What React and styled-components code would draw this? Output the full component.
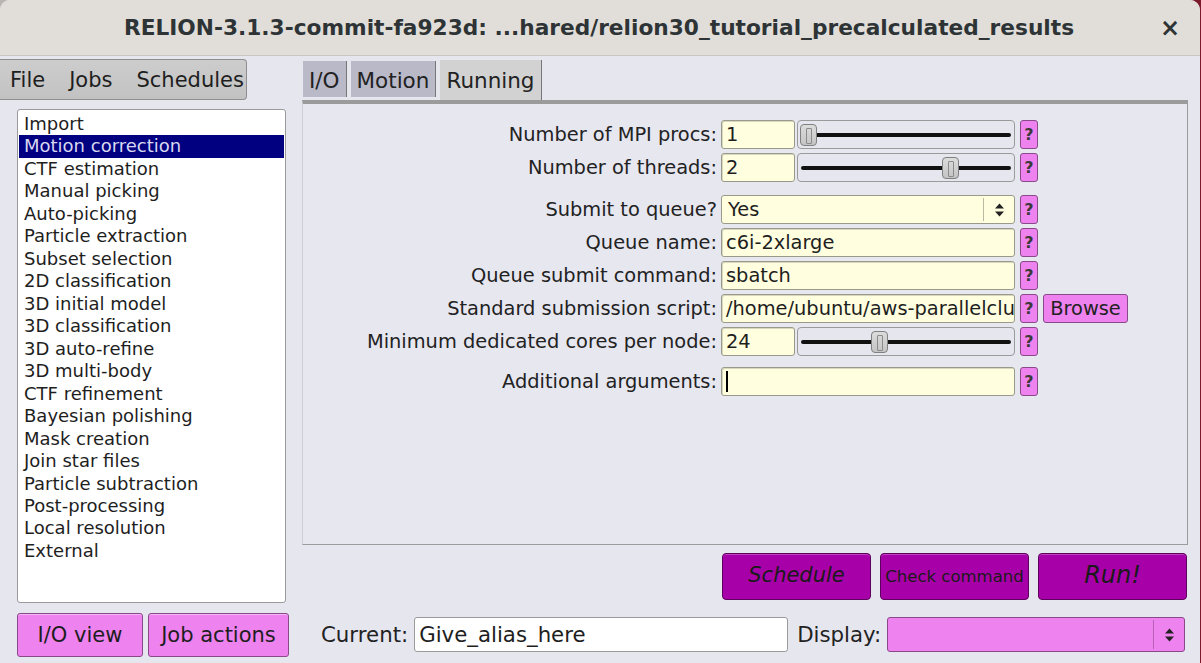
import React from 'react';
import styled, { createGlobalStyle } from 'styled-components';

const GlobalStyle = createGlobalStyle`
  html, body {
    margin: 0;
    padding: 0;
    background: linear-gradient(to right, #b9b6b1 50%, #7a1a2a 50%);
  }
  * {
    box-sizing: border-box;
  }
`;

const FONT = `"DejaVu Sans", "Noto Sans", sans-serif`;

const Window = styled.div`
  width: 1200px;
  height: 663px;
  display: flex;
  flex-direction: column;
  font-family: ${FONT};
  color: #222;
  background: #e6e6ef;
  border-radius: 10px 10px 0 0;
  overflow: hidden;
`;

const TitleBar = styled.div`
  height: 56px;
  flex-shrink: 0;
  display: flex;
  align-items: center;
  justify-content: center;
  position: relative;
  background: #e1ded9;
  border-bottom: 1px solid #c9c5bf;
  font-weight: bold;
  font-size: 21.7px;
  color: #2e3436;
  padding-right: 2px;
`;

const CloseX = styled.span`
  position: absolute;
  right: 20px;
  top: 14px;
  font-size: 24px;
  font-weight: bold;
  color: #2e3436;
`;

const Body = styled.div`
  flex: 1;
  display: flex;
  padding-top: 3px;
`;

const LeftColumn = styled.div`
  width: 302px;
  display: flex;
  flex-direction: column;
`;

const MenuBar = styled.div`
  width: 247px;
  height: 41px;
  display: flex;
  align-items: center;
  gap: 24px;
  padding-left: 10px;
  background: linear-gradient(#cdcdcd, #c2c2c2);
  border: 1px solid #8e8e8e;
  border-left: none;
  border-radius: 0 4px 4px 0;
  font-size: 21px;
  color: #1e1e1e;
  white-space: nowrap;
`;

const JobList = styled.div`
  margin: 9px 0 0 17px;
  width: 269px;
  height: 494px;
  background: #fff;
  border: 1px solid #9a9a9a;
  border-radius: 3px;
  padding: 3px 1px 2px;
  font-size: 18px;
`;

const JobItem = styled.div`
  height: 22.47px;
  line-height: 22.47px;
  padding-left: 5px;
  white-space: nowrap;
  background: ${p => (p.$selected ? '#000080' : 'transparent')};
  color: ${p => (p.$selected ? '#d8d8f0' : '#1e1e1e')};
`;

const SideButtons = styled.div`
  display: flex;
  gap: 5px;
  margin: 10px 0 0 17px;
`;

const PinkButton = styled.button`
  width: ${p => p.$w}px;
  height: 44px;
  background: #ee82ee;
  border: 1px solid #8a4a8a;
  border-radius: 3px;
  box-shadow: inset 0 1px 0 #f6b6f6;
  font-family: ${FONT};
  font-size: 21px;
  color: #1e1e1e;
  padding: 0;
`;

const MainColumn = styled.div`
  width: 886px;
  display: flex;
  flex-direction: column;
`;

const TabRow = styled.div`
  height: 41px;
  display: flex;
  align-items: flex-end;
  gap: 4px;
  padding-left: 1px;
`;

const Tab = styled.div`
  height: ${p => (p.$active ? 40 : 36)}px;
  padding: 0 6px;
  display: flex;
  align-items: center;
  background: ${p => (p.$active ? '#d2d2d2' : '#b9b9c8')};
  border-right: 1px solid #777;
  font-size: 21.5px;
  color: #222;
  margin-bottom: ${p => (p.$active ? 0 : 3)}px;
  padding-top: ${p => (p.$active ? 0 : 2)}px;
`;

const Panel = styled.div`
  height: 445px;
  background: #e7e7f0;
  border-top: 4px solid #9b9b9b;
  border-right: 1px solid #9b9b9b;
  border-bottom: 1px solid #9b9b9b;
  border-left: 1px solid #cfcfd8;
  padding-top: 16px;
  display: flex;
  flex-direction: column;
`;

const FormRow = styled.div`
  display: flex;
  align-items: center;
  height: 29px;
  margin-top: ${p => p.$gap}px;
`;

const Label = styled.div`
  width: 418px;
  text-align: right;
  padding-right: 4px;
  font-size: 19.4px;
  color: #222;
  white-space: nowrap;
`;

const TextField = styled.div`
  width: ${p => p.$w}px;
  height: 29px;
  background: #ffffe0;
  border: 1px solid #9a9a8a;
  border-radius: 3px;
  box-shadow: inset 1px 1px 0 #d8d8c0;
  padding-left: 4px;
  display: flex;
  align-items: center;
  font-size: 19.4px;
  color: #1e1e1e;
  white-space: nowrap;
  overflow: hidden;
`;

const Caret = styled.span`
  width: 2px;
  height: 21px;
  background: #000;
`;

const SliderBox = styled.div`
  width: 218px;
  height: 29px;
  margin-left: 2px;
  border: 1px solid #9a9a9a;
  border-radius: 4px;
  position: relative;
  background: #e6e6ef;
`;

const Track = styled.div`
  position: absolute;
  left: 3px;
  right: 3px;
  top: 12px;
  height: 4px;
  background: #111;
  border-radius: 2px;
`;

const Thumb = styled.div`
  position: absolute;
  top: 3px;
  width: 17px;
  height: 22px;
  background: linear-gradient(#dcdcdc, #c4c4c4);
  border: 1px solid #808080;
  border-radius: 4px;
  &::after {
    content: '';
    position: absolute;
    left: 5px;
    top: 3px;
    width: 4px;
    height: 14px;
    border: 1px solid #8a8a8a;
    border-radius: 1px;
  }
`;

const SelectBox = styled.div`
  width: ${p => p.$w}px;
  height: ${p => p.$h || 29}px;
  background: ${p => p.$bg || '#ffffe0'};
  border: 1px solid ${p => p.$border || '#9a9a8a'};
  border-radius: 3px;
  display: flex;
  align-items: center;
  font-size: 19.4px;
  color: #1e1e1e;
`;

const SelectValue = styled.div`
  flex: 1;
  padding-left: 6px;
`;

const SelectArrow = styled.div`
  width: 31px;
  border-left: 1px solid ${p => p.$line || '#b9b9a4'};
  margin: 2px 0;
  height: calc(100% - 4px);
  display: flex;
  align-items: center;
  justify-content: center;
`;

const HelpButton = styled.div`
  width: 18px;
  height: 29px;
  margin-left: 5px;
  background: #ee82ee;
  border: 1px solid #8a4a8a;
  border-radius: 3px;
  display: flex;
  align-items: center;
  justify-content: center;
  font-size: 16px;
  font-weight: bold;
  color: #3a3a3a;
`;

const BrowseButton = styled.div`
  width: 85px;
  height: 29px;
  margin-left: 5px;
  background: #ee82ee;
  border: 1px solid #8a4a8a;
  border-radius: 3px;
  display: flex;
  align-items: center;
  justify-content: center;
  font-size: 19.4px;
  color: #222;
`;

const ActionRow = styled.div`
  display: flex;
  justify-content: flex-end;
  gap: 9px;
  margin-top: 8px;
  padding-right: 1px;
`;

const ActionButton = styled.div`
  width: 149px;
  height: 47px;
  background: #a800a8;
  border: 1px solid #5e005e;
  border-radius: 4px;
  box-shadow: inset 0 1px 0 #c040c0;
  display: flex;
  align-items: center;
  justify-content: center;
  font-family: ${FONT};
  font-size: ${p => p.$size}px;
  font-style: ${p => (p.$italic ? 'italic' : 'normal')};
  color: #1a1a1a;
  padding-bottom: ${p => (p.$italic ? 4 : 0)}px;
  white-space: nowrap;
`;

const CurrentRow = styled.div`
  display: flex;
  align-items: center;
  margin-top: 17px;
  padding-left: 19px;
  font-size: 21.3px;
  white-space: nowrap;
`;

const CurrentInput = styled.div`
  width: 374px;
  height: 35px;
  margin-left: 6px;
  background: #fff;
  border: 1px solid #9a9a9a;
  border-radius: 3px;
  padding-left: 4px;
  display: flex;
  align-items: center;
  font-size: 21.3px;
  color: #1e1e1e;
`;

const DisplayLabel = styled.span`
  margin-left: 9px;
  margin-right: 6px;
`;

const ArrowIcon = () => (
  <svg width="11" height="16" viewBox="0 0 11 16">
    <path d="M1 6.5 L5.5 1.5 L10 6.5 Z M1 9.5 L5.5 14.5 L10 9.5 Z" fill="#222" />
  </svg>
);

const jobs = [
  'Import', 'Motion correction', 'CTF estimation', 'Manual picking', 'Auto-picking',
  'Particle extraction', 'Subset selection', '2D classification', '3D initial model',
  '3D classification', '3D auto-refine', '3D multi-body', 'CTF refinement',
  'Bayesian polishing', 'Mask creation', 'Join star files', 'Particle subtraction',
  'Post-processing', 'Local resolution', 'External',
];

// slider position is a fraction 0..1 of the track
const Slider = ({ pos }) => (
  <SliderBox>
    <Track />
    <Thumb style={{ left: `${2 + pos * 197}px` }} />
  </SliderBox>
);

export default function App() {
  return (
    <>
      <GlobalStyle />
      <Window>
        <TitleBar>
          RELION-3.1.3-commit-fa923d: ...hared/relion30_tutorial_precalculated_results
          <CloseX>×</CloseX>
        </TitleBar>
        <Body>
          <LeftColumn>
            <MenuBar>
              <span>File</span>
              <span>Jobs</span>
              <span>Schedules</span>
            </MenuBar>
            <JobList>
              {jobs.map(j => (
                <JobItem key={j} $selected={j === 'Motion correction'}>{j}</JobItem>
              ))}
            </JobList>
            <SideButtons>
              <PinkButton $w={126}>I/O view</PinkButton>
              <PinkButton $w={141}>Job actions</PinkButton>
            </SideButtons>
          </LeftColumn>
          <MainColumn>
            <TabRow>
              <Tab>I/O</Tab>
              <Tab>Motion</Tab>
              <Tab $active>Running</Tab>
            </TabRow>
            <Panel>
              <FormRow $gap={0}>
                <Label>Number of MPI procs:</Label>
                <TextField $w={74}>1</TextField>
                <Slider pos={0} />
                <HelpButton>?</HelpButton>
              </FormRow>
              <FormRow $gap={4}>
                <Label>Number of threads:</Label>
                <TextField $w={74}>2</TextField>
                <Slider pos={0.72} />
                <HelpButton>?</HelpButton>
              </FormRow>
              <FormRow $gap={13}>
                <Label>Submit to queue?</Label>
                <SelectBox $w={294}>
                  <SelectValue>Yes</SelectValue>
                  <SelectArrow><ArrowIcon /></SelectArrow>
                </SelectBox>
                <HelpButton>?</HelpButton>
              </FormRow>
              <FormRow $gap={4}>
                <Label>Queue name:</Label>
                <TextField $w={294}>c6i-2xlarge</TextField>
                <HelpButton>?</HelpButton>
              </FormRow>
              <FormRow $gap={4}>
                <Label>Queue submit command:</Label>
                <TextField $w={294}>sbatch</TextField>
                <HelpButton>?</HelpButton>
              </FormRow>
              <FormRow $gap={4}>
                <Label>Standard submission script:</Label>
                <TextField $w={294}>/home/ubuntu/aws-parallelclu</TextField>
                <HelpButton>?</HelpButton>
                <BrowseButton>Browse</BrowseButton>
              </FormRow>
              <FormRow $gap={4}>
                <Label>Minimum dedicated cores per node:</Label>
                <TextField $w={74}>24</TextField>
                <Slider pos={0.36} />
                <HelpButton>?</HelpButton>
              </FormRow>
              <FormRow $gap={11}>
                <Label>Additional arguments:</Label>
                <TextField $w={294}><Caret /></TextField>
                <HelpButton>?</HelpButton>
              </FormRow>
            </Panel>
            <ActionRow>
              <ActionButton $italic $size={21}>Schedule</ActionButton>
              <ActionButton $size={16.5}>Check command</ActionButton>
              <ActionButton $italic $size={24}>Run!</ActionButton>
            </ActionRow>
            <CurrentRow>
              Current:
              <CurrentInput>Give_alias_here</CurrentInput>
              <DisplayLabel>Display:</DisplayLabel>
              <SelectBox $w={298} $h={35} $bg="#ee82ee" $border="#8a4a8a">
                <SelectValue />
                <SelectArrow $line="#b860b8"><ArrowIcon /></SelectArrow>
              </SelectBox>
            </CurrentRow>
          </MainColumn>
        </Body>
      </Window>
    </>
  );
}
